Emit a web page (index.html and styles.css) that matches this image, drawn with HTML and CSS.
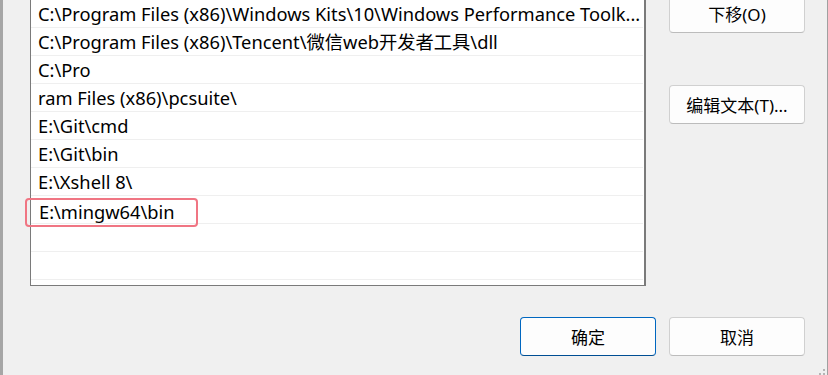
FILE: index.html
```html
<!DOCTYPE html>
<html lang="zh-CN">
  <head>
    <meta charset="UTF-8" />
    <meta name="viewport" content="width=device-width, initial-scale=1.0" />
    <title>编辑环境变量</title>
    <link rel="stylesheet" href="styles.css">
  </head>
  <body>
    <div class="dialog">
      <div class="main">
        <div class="path-list">
          <div class="row">C:\Program Files (x86)\Windows Kits\10\Windows Performance Toolk...</div>
          <div class="row">C:\Program Files (x86)\Tencent\微信web开发者工具\dll</div>
          <div class="row">C:\Pro</div>
          <div class="row">ram Files (x86)\pcsuite\</div>
          <div class="row">E:\Git\cmd</div>
          <div class="row">E:\Git\bin</div>
          <div class="row">E:\Xshell 8\</div>
          <div class="row"><span class="marked">E:\mingw64\bin</span></div>
          <div class="row"></div>
          <div class="row"></div>
        </div>
        <div class="side-buttons">
          <button class="btn">下移(O)</button>
          <button class="btn">编辑文本(T)...</button>
        </div>
      </div>
      <div class="footer">
        <button class="btn primary">确定</button>
        <button class="btn">取消</button>
      </div>
    </div>
    <div class="grip"></div>
  </body>
</html>
```

FILE: styles.css
```css
html,
body {
  height: 100%;
}

body {
  margin: 0;
  background-color: #f0f0f0;
  font-family: "Noto Sans", "Noto Sans CJK SC", sans-serif;
  font-size: 18.3px;
  color: #000;
  overflow: hidden;
  border-left: 3px solid #a6a6a6;
  border-right: 1px solid #a0a0a0;
  box-sizing: border-box;
  position: relative;
}

.dialog {
  margin-top: -6px;
  padding-left: 27px;
  padding-right: 22px;
}

.main {
  display: flex;
  gap: 23px;
}

.path-list {
  width: 615px;
  margin-top: 5px;
  border: 1px solid #7a7a7a;
  border-right-width: 2px;
  background-color: #fff;
  padding: 0 1px 5px 0;
}

.row {
  height: 27px;
  line-height: 28px;
  border-bottom: 1px solid #efefef;
  padding-left: 7px;
  white-space: nowrap;
}

.marked {
  display: inline-block;
  margin-left: -13px;
  padding-left: 12px;
  width: 157px;
  height: 25px;
  border: 2px solid #f07583;
  border-radius: 4px;
  margin-top: 2px;
  line-height: 24px;
  vertical-align: top;
}

.side-buttons {
  display: flex;
  flex-direction: column;
  gap: 52px;
}

.btn {
  width: 136px;
  height: 39px;
  font-family: inherit;
  font-size: 17px;
  color: #000;
  background-color: #fdfdfd;
  border: 1px solid #d0d0d0;
  border-bottom-color: #bcbcbc;
  border-radius: 4px;
  padding: 0;
}

.btn.primary {
  border-color: #0067c0;
  border-bottom-color: #004e93;
}

.footer {
  display: flex;
  justify-content: flex-end;
  gap: 13px;
  margin-top: 31px;
}

.grip {
  position: absolute;
  right: 2px;
  bottom: 0;
  width: 6px;
  height: 6px;
  background:
    linear-gradient(#b5b5b5, #b5b5b5) 4px 0 / 2px 2px no-repeat,
    linear-gradient(#b5b5b5, #b5b5b5) 0 4px / 2px 2px no-repeat,
    linear-gradient(#b5b5b5, #b5b5b5) 4px 4px / 2px 2px no-repeat;
}
```
